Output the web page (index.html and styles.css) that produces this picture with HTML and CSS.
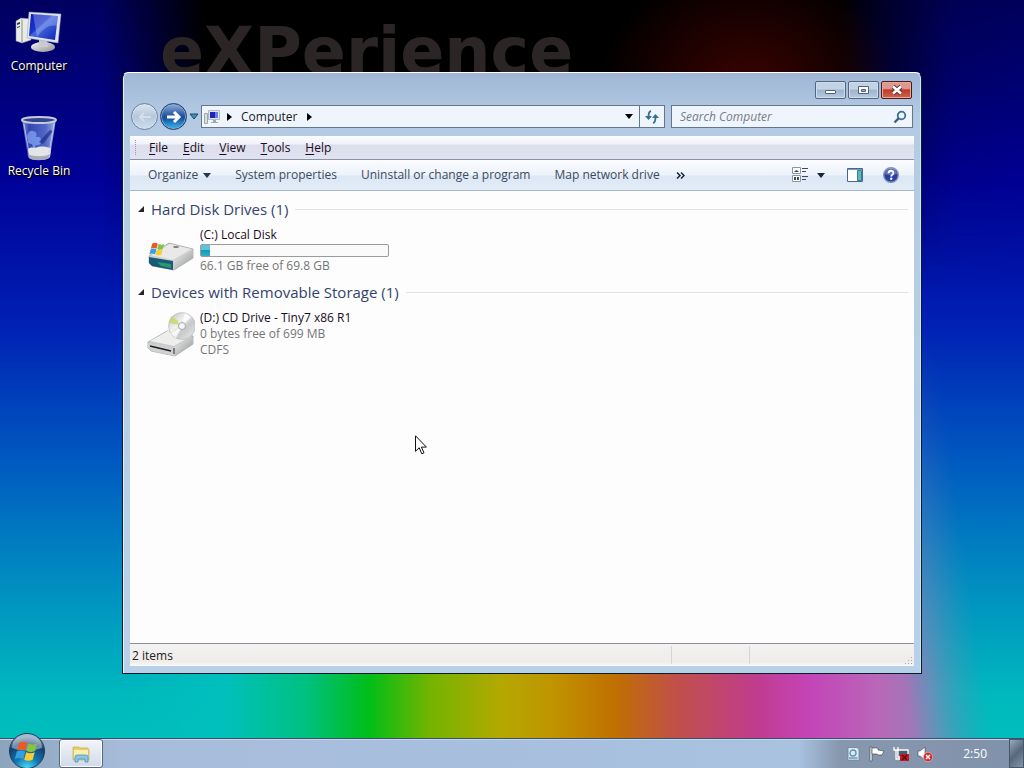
FILE: index.html
```html
<!DOCTYPE html>
<html lang="en">
<head>
    <meta charset="UTF-8">
    <meta name="viewport" content="width=device-width, initial-scale=1.0">
    <title>Computer</title>
    <link rel="stylesheet" href="styles.css">
</head>
<body>
    <svg class="defs" width="0" height="0" aria-hidden="true">
        <defs>
            <linearGradient id="screen" x1="0" y1="0" x2="1" y2="1">
                <stop offset="0" stop-color="#0a1fb4"/>
                <stop offset=".4" stop-color="#1a36cc"/>
                <stop offset=".46" stop-color="#4468e0"/>
                <stop offset="1" stop-color="#0d22b0"/>
            </linearGradient>
            <linearGradient id="metal" x1="0" y1="0" x2="1" y2="1">
                <stop offset="0" stop-color="#f4f4f4"/>
                <stop offset="1" stop-color="#8f9192"/>
            </linearGradient>
            <linearGradient id="bin" x1="0" y1="0" x2="1" y2="0">
                <stop offset="0" stop-color="#8fa0dc"/>
                <stop offset=".2" stop-color="#3346ae"/>
                <stop offset=".7" stop-color="#5468c8"/>
                <stop offset="1" stop-color="#a3b2e6"/>
            </linearGradient>
            <linearGradient id="disc" x1="0" y1="0" x2="1" y2="1">
                <stop offset="0" stop-color="#b9bdb9"/>
                <stop offset=".4" stop-color="#f2f2f2"/>
                <stop offset=".6" stop-color="#c6c8ca"/>
                <stop offset="1" stop-color="#ececec"/>
            </linearGradient>
            <radialGradient id="orb" cx=".5" cy="1" r=".9">
                <stop offset="0" stop-color="#4fe0f4"/>
                <stop offset=".4" stop-color="#0f78b4"/>
                <stop offset=".8" stop-color="#143f6e"/>
                <stop offset="1" stop-color="#6d8eae"/>
            </radialGradient>
            <symbol id="flag" viewBox="0 0 24 24">
                <path fill="#ea5a24" d="M4 4c3-2 6-1.500 8.500 0l-2 7.500c-3-1.500-5.500-1.500-8.500 0z"/>
                <path fill="#86c440" d="M13.500 4.500c3 1.500 5.500 1.500 8.500 0l-2 7.500c-3 1.500-5.500 1.500-8.500 0z"/>
                <path fill="#35a0e0" d="M1.800 12.500c3-1.500 5.500-1.500 8.500 0l-2 7.500c-3-1.500-5.500-1.500-8.500 0z"/>
                <path fill="#fccb2d" d="M11.200 13.200c3 1.500 5.500 1.500 8.500 0l-2 7.500c-3 1.500-5.500 1.500-8.500 0z"/>
            </symbol>
        </defs>
    </svg>

    <main class="desktop">
        <div class="rainbow"></div>
        <div class="night"></div>
        <div class="wordmark">eXPerience</div>

        <nav class="shortcuts">
            <a href="#computer" class="shortcut">
                <svg width="48" height="48" viewBox="0 0 48 48">
                    <path fill="#e9ebe6" stroke="#8a8d90" stroke-width=".5" d="M1 12l5-3 10 1v21l-9 3-6-2z"/>
                    <path fill="#b9bcbc" d="M6 10l2 1v22l-1 1-1-1z"/>
                    <path fill="#3a3c40" d="M2 14l3-1v2l-3 1zM2 18l3-1v1l-3 1z"/>
                    <ellipse cx="28" cy="38" rx="12" ry="5" fill="url(#metal)"/>
                    <path fill="#c8cbd0" d="M24 30l8 1 1 7h-9z"/>
                    <path fill="#dfe3ea" stroke="#9aa1b4" stroke-width=".5" d="M14 3l32 2-3 29-31-5z"/>
                    <path fill="url(#screen)" d="M16 5l27 2-3 24-26-4z"/>
                    <path fill="#fff" opacity=".25" d="M43 7l-1 10c-8-2-14 3-20 11L18 5z"/>
                </svg>
                <span>Computer</span>
            </a>
            <a href="#bin" class="shortcut">
                <svg width="48" height="48" viewBox="0 0 48 48">
                    <path fill="url(#bin)" d="M7 5h34l-6 38c-2 4-20 4-22 0z"/>
                    <path fill="#7da0f0" opacity=".8" d="M12 22q2-6 6-5 5 1 3 6 5-1 5 4t-5 4l-2 5-2-6q-5 0-4-4z"/>
                    <path fill="#1c2c86" opacity=".7" d="M24 28l11-12 3 1-10 13z"/>
                    <path fill="#e4e5e6" d="M13 35c4-3 6 0 10-2 5-1 8 0 13 1l-1 9c-4 4-18 4-21 0z"/>
                    <path fill="#a9adb5" d="M13 40c5 3 18 3 22 0l-1 4c-4 3-17 3-20 0z"/>
                    <ellipse cx="24" cy="6" rx="17" ry="3" fill="#32458e" stroke="#c5cbd8" stroke-width="2"/>
                    <path d="M9 10l5 29M39 10l-5 29" stroke="#d3dbf5" opacity=".7"/>
                </svg>
                <span>Recycle Bin</span>
            </a>
        </nav>

        <section class="window" aria-label="Computer">
            <header class="caption">
                <button class="caption-btn" aria-label="Minimize">
                    <svg width="14" height="12" viewBox="0 0 14 12"><rect x="1.500" y="6.500" width="10" height="3" rx=".5" fill="#fff" stroke="#53607c"/></svg>
                </button>
                <button class="caption-btn" aria-label="Maximize">
                    <svg width="14" height="12" viewBox="0 0 14 12"><path fill="#fff" fill-rule="evenodd" stroke="#53607c" d="M1.500 2.500h10v7h-10zM4.500 5.500v2h4v-2z"/></svg>
                </button>
                <button class="caption-btn close" aria-label="Close">
                    <svg width="14" height="12" viewBox="0 0 14 12"><path stroke="#5e3440" stroke-width="4.500" d="M3 2.500l8 7M11 2.500l-8 7"/><path stroke="#fff" stroke-width="2.600" d="M3 2.500l8 7M11 2.500l-8 7"/></svg>
                </button>
            </header>

            <div class="navbar">
                <div class="travel">
                    <button class="round" aria-label="Back">
                        <svg width="16" height="16" viewBox="0 0 16 16"><path fill="none" stroke="#d3deea" stroke-width="2" d="M14 8H3M7 4L3 8l4 4"/></svg>
                    </button>
                    <button class="round forward" aria-label="Forward">
                        <svg width="16" height="16" viewBox="0 0 16 16"><path fill="none" stroke="#fff" stroke-width="3" d="M1 8h12M8 3l5 5-5 5"/></svg>
                    </button>
                    <button class="recent" aria-label="Recent pages">
                        <svg width="10" height="7" viewBox="0 0 10 7"><path fill="#3d93c4" stroke="#22435f" d="M1 1h8L5 6z"/></svg>
                    </button>
                </div>
                <div class="address">
                    <svg class="place" width="18" height="18" viewBox="0 0 18 18">
                        <path fill="#d9dedd" stroke="#8d9597" stroke-width=".8" d="M2.500 5.500h3v10h-3z"/>
                        <path fill="#dfe4ee" stroke="#a5adc2" stroke-width=".8" d="M6.500 2.500h11v9h-11z"/>
                        <path fill="#1a25bc" d="M8 4h5v6H8z"/><path fill="#6c7de0" d="M13 4h3v6h-3z"/>
                        <path fill="#a0a8b2" d="M11 12h3v2h2v1H9v-1h2z"/>
                    </svg>
                    <svg class="tick" width="5" height="8" viewBox="0 0 5 8"><path d="M0 0l5 4-5 4z"/></svg>
                    <a href="#computer">Computer</a>
                    <svg class="tick" width="5" height="8" viewBox="0 0 5 8"><path d="M0 0l5 4-5 4z"/></svg>
                    <button class="drop" aria-label="Previous locations">
                        <svg width="8" height="5" viewBox="0 0 8 5"><path d="M0 0h8L4 5z"/></svg>
                    </button>
                    <button class="refresh" aria-label="Refresh">
                        <svg width="16" height="16" viewBox="0 0 16 16">
                            <path fill="none" stroke="#36708c" stroke-width="1.800" d="M7 2C4.500 2.500 4.500 5 4.500 8M9 14c2.500-.5 2.500-3 2.500-6"/>
                            <path fill="#36708c" d="M1 7h7l-3.500 4zM8 9h7l-3.500-4z"/>
                        </svg>
                    </button>
                </div>
                <form class="search">
                    <input type="text" aria-label="Search Computer" placeholder="Search Computer">
                    <svg width="14" height="14" viewBox="0 0 14 14"><circle cx="8.500" cy="5.500" r="3.800" fill="none" stroke="#3d6f93" stroke-width="1.800"/><path stroke="#3d5f83" stroke-width="2.400" d="M5.800 8.200L1.500 12.500"/></svg>
                </form>
            </div>

            <div class="menubar">
                <button><u>F</u>ile</button>
                <button><u>E</u>dit</button>
                <button><u>V</u>iew</button>
                <button><u>T</u>ools</button>
                <button><u>H</u>elp</button>
            </div>

            <div class="commands">
                <button>Organize <svg width="8" height="5" viewBox="0 0 8 5"><path fill="#1e395b" d="M0 0h8L4 5z"/></svg></button>
                <button>System properties</button>
                <button>Uninstall or change a program</button>
                <button>Map network drive</button>
                <button class="more" aria-label="More">
                    <svg width="9" height="7" viewBox="0 0 9 7"><path fill="none" stroke="#14253d" stroke-width="1.500" d="M1 .5l3 3-3 3M5 .5l3 3-3 3"/></svg>
                </button>
                <div class="tools">
                    <button aria-label="Change your view">
                        <svg width="16" height="16" viewBox="0 0 16 16">
                            <path fill="#fff" stroke="#8b95a2" d="M.5.500h8v6h-8zM.5 8.500h8v6h-8z"/>
                            <path fill="#39495c" d="M2 5l2-2 2 1 1 1zM2 10h2v3H2zM5 10h2v3H5zM10 1h6v1h-6zM10 4h4v1h-4zM10 9h6v1h-6zM10 12h4v1h-4z"/>
                        </svg>
                    </button>
                    <button aria-label="More options">
                        <svg width="8" height="5" viewBox="0 0 8 5"><path fill="#14253d" d="M0 0h8L4 5z"/></svg>
                    </button>
                    <button class="pane" aria-label="Show the preview pane">
                        <svg width="16" height="14" viewBox="0 0 16 14"><path fill="#fff" stroke="#47688c" d="M.5.500h15v13H.5z"/><path fill="#7d99b8" d="M1 1h14v1H1z"/><path fill="#58b9bf" stroke="#3c7d98" d="M10.500 2.500h4v10h-4z"/></svg>
                    </button>
                    <button aria-label="Get help">
                        <svg width="16" height="16" viewBox="0 0 16 16"><circle cx="8" cy="8" r="7.300" fill="#2b40a6" stroke="#8294b6" stroke-width="1.400"/><path fill="#fff" opacity=".25" d="M2 7a6 6 0 0 1 12 0q-6 2-12 0z"/><path fill="none" stroke="#fff" stroke-width="1.900" d="M5.600 6.200C5.600 3 10.400 3 10.400 6c0 1.600-2.200 1.700-2.200 3.600"/><circle cx="8.200" cy="11.800" r="1.200" fill="#fff"/></svg>
                    </button>
                </div>
            </div>

            <div class="files">
                <section class="group">
                    <h2><svg width="6" height="6" viewBox="0 0 6 6"><path fill="#262626" d="M6 0v6H0z"/></svg>Hard Disk Drives (1)</h2>
                    <div class="drive">
                        <svg width="48" height="48" viewBox="0 0 48 48">
                            <path fill="#cfd1d1" stroke="#8b8d8d" stroke-width=".6" d="M2 29l20-13 24 6v9L27 43 5 39l-3-3z"/>
                            <path fill="#e9e9e8" d="M4 28l19-11 21 5-18 11z"/>
                            <path fill="url(#metal)" d="M26 34l20-11v8L27 43z"/>
                            <path fill="#195a78" d="M2 30l24 4v9L5 39l-3-3z"/>
                            <path fill="#2a9a6a" d="M10 35l14 2v4l-10-2z"/>
                            <ellipse cx="29" cy="20" rx="3" ry="1" fill="#777"/>
                            <use href="#flag" x="2" y="14" width="17" height="16"/>
                        </svg>
                        <div class="info">
                            <span class="name">(C:) Local Disk</span>
                            <div class="usage" role="meter" aria-label="Used space" aria-valuemin="0" aria-valuemax="100" aria-valuenow="5"><div class="used" style="width: 5%"></div></div>
                            <span class="detail">66.1 GB free of 69.8 GB</span>
                        </div>
                    </div>
                </section>
                <section class="group">
                    <h2><svg width="6" height="6" viewBox="0 0 6 6"><path fill="#262626" d="M6 0v6H0z"/></svg>Devices with Removable Storage (1)</h2>
                    <div class="drive">
                        <svg width="48" height="48" viewBox="0 0 48 48">
                            <path fill="#c9cbcb" stroke="#8b8d8d" stroke-width=".6" d="M1 32l19-11 26 5v8L28 46 4 41l-3-3z"/>
                            <path fill="#eeeeed" d="M3 31l18-10 23 5-17 10z"/>
                            <path fill="url(#metal)" d="M27 37l19-10v7L28 46z"/>
                            <path fill="#cfd0d1" d="M1 33l26 4 1 9-24-5-3-3z"/>
                            <path stroke="#1f1f1f" stroke-width="1.500" d="M3 36l21 5"/>
                            <path stroke="#2a2a2a" d="M27 38v6"/>
                            <circle cx="35" cy="16" r="13.500" fill="url(#disc)" stroke="#b4b6b6" stroke-width=".6"/>
                            <path fill="#c3d86c" opacity=".8" d="M22 13l10 2-1-4-7-5z"/>
                            <path fill="#fff" opacity=".8" d="M35 16l3-13 6 4zM35 16l-6 12-5-4z"/>
                            <circle cx="35" cy="16" r="3.500" fill="#f7f7f7" stroke="#a5a7a8"/>
                        </svg>
                        <div class="info">
                            <span class="name">(D:) CD Drive - Tiny7 x86 R1</span>
                            <span class="detail">0 bytes free of 699 MB</span>
                            <span class="detail">CDFS</span>
                        </div>
                    </div>
                </section>
            </div>

            <footer class="status">
                <span class="count">2 items</span>
                <span class="cell"></span>
                <span class="cell wide"></span>
                <svg class="grip" width="9" height="9" viewBox="0 0 9 9"><path fill="#a5aab2" d="M7 1h1v1H7zM4 4h1v1H4zM7 4h1v1H7zM1 7h1v1H1zM4 7h1v1H4zM7 7h1v1H7z"/></svg>
            </footer>
        </section>

        <svg class="cursor" width="12" height="20" viewBox="0 0 12 20"><path fill="#fff" stroke="#111" d="M.5.800v15.500l3.700-3.500 2.600 6 2.200-1-2.600-5.700h5z"/></svg>
    </main>

    <footer class="taskbar">
        <button class="start" aria-label="Start">
            <svg width="38" height="38" viewBox="0 0 38 38">
                <circle cx="19" cy="19" r="17.500" fill="url(#orb)" stroke="#1b3b58"/>
                <path fill="#fff" opacity=".4" d="M4 16a15 14 0 0 1 30 0q-15 5-30 0z"/>
                <use href="#flag" x="7" y="7" width="24" height="24"/>
            </svg>
        </button>
        <button class="task" aria-label="Computer">
            <svg width="20" height="18" viewBox="0 0 20 18">
                <path fill="#e7cf6c" stroke="#c2a644" stroke-width=".6" d="M2 2h6l1 1h8l1 2v10H2z"/>
                <path fill="#fbefae" d="M3 5h14v8H3z"/>
                <path fill="#8cc6e6" stroke="#4a96c4" stroke-width=".8" d="M4 17v-5q0-2 2-2h9q2 0 2 2v5h-3v-3H7v3z"/>
            </svg>
        </button>
        <div class="tray">
            <svg width="16" height="16" viewBox="0 0 16 16"><path fill="#dbe8f0" stroke="#6a8499" stroke-width=".8" d="M3 1.500h9l2 2v11H3z"/><path fill="#b5cddd" d="M4 11h9v3H4z"/><circle cx="8" cy="7" r="3" fill="none" stroke="#5d93b5" stroke-width="1.300"/><path stroke="#5d93b5" d="M4 12h8"/></svg>
            <svg width="16" height="16" viewBox="0 0 16 16"><path fill="#fff" stroke="#333c48" stroke-width=".6" d="M1 1h2v14H1z"/><path fill="#fff" stroke="#333c48" stroke-width=".6" d="M3 2h6v2l6 1-2 4H9L8 8H3z"/></svg>
            <svg width="16" height="16" viewBox="0 0 16 16"><path fill="#4d5a6a" stroke="#fff" stroke-width="1.300" d="M5 4h10v7H5zM7 14h6"/><path fill="none" stroke="#fff" stroke-width="1.300" d="M1 1v3h4V1M3 4v9h4"/><path fill="#c61a22" d="M7 8h9v7H7z"/><path stroke="#5a0c12" stroke-width="1.300" d="M9 9l5 5M14 9l-5 5"/></svg>
            <svg width="16" height="16" viewBox="0 0 16 16"><path fill="#fff" stroke="#3e4854" stroke-width=".6" d="M1 5h2l5-4v13l-5-4H1z"/><circle cx="11" cy="11" r="4.700" fill="#d5282c" stroke="#fff" stroke-width=".4"/><path stroke="#fff" stroke-width="1.500" d="M9 9l4 4M13 9l-4 4"/></svg>
            <time>2:50</time>
            <button class="peek" aria-label="Show desktop"></button>
        </div>
    </footer>
</body>
</html>
```

FILE: styles.css
```css
* { box-sizing: border-box; }
body { margin: 0; height: 100vh; display: flex; flex-direction: column; overflow: hidden; font: 12px/16px "Open Sans", "Noto Sans", sans-serif; color: #1b0b22; }
button { margin: 0; padding: 0; border: 0; background: none; color: inherit; font: inherit; }
svg { display: block; flex: none; }
a { color: inherit; text-decoration: none; }
.defs { position: absolute; }

/* wallpaper */
.desktop { position: relative; flex: 1; overflow: hidden; background: linear-gradient(#000060, #000098 24%, #0020b4 44%, #0058c0 62%, #0090c0 80%, #00b8be 94%, #00bebc); }
.rainbow, .night { position: absolute; inset: 0; }
.rainbow {
    background: linear-gradient(90deg, transparent 12%, #00c0bc 22%, #00c080 30%, #00be18 36%, #74b400 42%, #b4a800 49%, #c09400 54%, #c07000 60%, #c05048 66%, #c03c90 74%, #c444b8 79%, #b868b8 86%, #9080b8 91%, #5090b8 96%);
    -webkit-mask-image: linear-gradient(transparent 42%, #000 92%), linear-gradient(82deg, #000 81%, transparent 88%);
    -webkit-mask-composite: source-in;
    mask-image: linear-gradient(transparent 42%, #000 92%), linear-gradient(82deg, #000 81%, transparent 88%);
    mask-composite: intersect;
}
.night {
    background:
        radial-gradient(ellipse 150px 130px at 73% 90px, #3c0300, transparent),
        linear-gradient(90deg, transparent 10%, #000 20%, #000 82%, rgba(0, 0, 24, .8) 86%, rgba(0, 0, 40, .2) 93%, rgba(0, 0, 40, .1));
    -webkit-mask-image: linear-gradient(#000 9%, transparent 40%);
    mask-image: linear-gradient(#000 9%, transparent 40%);
}
.wordmark { position: absolute; left: 160px; top: 16px; font: bold 65px/72px "DejaVu Sans", sans-serif; color: #2b2525; }

.shortcuts { position: relative; width: 78px; padding-top: 9px; display: flex; flex-direction: column; gap: 40px; color: #fff; text-shadow: 0 1px 2px #000, 1px 1px 1px #000; }
.shortcut { display: flex; flex-direction: column; align-items: center; gap: 1px; }

/* explorer window */
.window { position: absolute; top: 72px; right: 102px; bottom: 64px; left: 122px; display: flex; flex-direction: column; padding: 0 7px 7px; border: 1px solid #0c1c2c; border-top-color: #fff; border-radius: 6px 6px 0 0; background: linear-gradient(#9fb6d6, #b3c9e2 40px, #b4cbe2 70px, #b9d1e8); box-shadow: inset 1px 0 #e3f1fa, inset -1px 0 #c5e8f4; }
.caption { display: flex; justify-content: flex-end; gap: 2px; padding: 8px 2px 6px; }
.caption-btn { width: 31px; height: 18px; display: grid; place-items: center; border: 1px solid #56657f; border-radius: 2px; background: linear-gradient(#c3d3e6 45%, #9db3cd 50%, #b5cbe2); box-shadow: inset 0 0 0 1px #cfdded; }
.close { border-color: #4b1820; background: linear-gradient(#dd9a8c 40%, #bc3a28 50%, #d4654c); box-shadow: inset 0 0 0 1px #e8a89a; }

.navbar { display: flex; align-items: center; height: 23px; margin-bottom: 8px; padding: 0 1px; }
.travel { display: flex; align-items: center; width: 70px; gap: 2px; }
.round { width: 27px; height: 27px; display: grid; place-items: center; border: 1px solid #6b819f; border-radius: 50%; background: linear-gradient(#dbe6f1, #b5c7da 50%, #cddeed); box-shadow: inset 0 0 0 1px #d5e2ef; }
.forward { border-color: #1f3d69; background: linear-gradient(#8fb0dc, #1f4d98 50%, #1558a8 60%, #3fb8ec); box-shadow: inset 0 0 0 1px #7fa8d4; }
.address { flex: 1; align-self: stretch; display: flex; align-items: center; border: 1px solid #64758e; background: #eff5fd; color: #1a1a2a; }
.place { margin-right: 7px; }
.address a { margin: 0 9px; }
.drop { margin-left: auto; padding: 4px 6px; }
.refresh { align-self: stretch; width: 25px; display: grid; place-items: center; border-left: 1px solid #64758e; }
.search { width: 242px; align-self: stretch; display: flex; align-items: center; margin-left: 6px; padding: 0 5px 0 8px; border: 1px solid #64758e; background: #eff5fd; }
.search input { flex: 1; min-width: 0; padding: 0; border: 0; outline: 0; background: none; font: inherit; }
.search input::placeholder { color: #767c88; font-style: italic; opacity: 1; }

.menubar { position: relative; display: flex; align-items: center; gap: 15px; height: 24px; padding-left: 19px; border-bottom: 1px solid #8b93a8; background: linear-gradient(#fdfdff, #f0f2fa 8px, #dcdeec 9px, #e2e3f0); }
.menubar::before { content: ""; position: absolute; left: 5px; top: 4px; bottom: 4px; border-left: 1px dotted #b08cb4; }
.menubar u { text-underline-offset: 2px; }
.commands { display: flex; align-items: center; gap: 24px; height: 31px; padding: 0 15px 0 18px; border-bottom: 1px solid #a6b8ce; background: linear-gradient(#fafcff, #edf3fb 15px, #dce7f4 16px, #e3edf8); color: #3b4a61; }
.commands button { display: flex; align-items: center; gap: 5px; white-space: nowrap; }
.commands .more { margin-left: -8px; }
.tools { display: flex; align-items: center; gap: 9px; margin-left: auto; }
.tools .pane { margin: 0 11px 0 13px; }

.files { flex: 1; min-height: 0; padding: 7px 6px 0 8px; background: #fdfdfd; }
.group { margin-bottom: 6px; }
.group h2 { display: flex; align-items: center; gap: 7px; margin: 0; font-size: 15px; line-height: 22px; font-weight: 400; color: #33446c; }
.group h2::after { content: ""; flex: 1; height: 1px; background: #e0e3e8; }
.drive { display: flex; gap: 5px; padding: 7px 0 0 9px; }
.info { display: flex; flex-direction: column; }
.detail { color: #757575; }
.usage { width: 189px; height: 13px; margin: 1px 0; border: 1px solid #9b9b9b; border-radius: 2px; background: #fafafa; }
.used { height: 100%; background: linear-gradient(#5cc4d8 45%, #1b98b4 50%, #30b0c8); }

.status { position: relative; display: flex; height: 23px; border-top: 1px solid #8f8f94; background: linear-gradient(#f3f2f2, #efecea 80%, #fbfbfb); }
.count { flex: 1; padding: 4px 2px; color: #222; }
.cell { width: 78px; margin: 2px 0; border-left: 1px solid #d5d5d5; }
.wide { width: 165px; }
.grip { position: absolute; right: 1px; bottom: 1px; }
.cursor { position: absolute; left: 415px; top: 435px; }

/* taskbar */
.taskbar { position: relative; display: flex; height: 30px; border-top: 1px solid #35536e; background: linear-gradient(90deg, #8ba3bb, #a7bcda 12%, #a8c2e0 78%, #8797ae 82%, #8092ab); box-shadow: inset 0 1px #c7d5e5; }
.start { width: 38px; height: 38px; margin: -7px 13px 0 8px; }
.task { width: 44px; height: 29px; display: grid; place-items: center; border: 1px solid #54677f; border-radius: 3px; background: linear-gradient(#f2f5fa, #d0daea); box-shadow: inset 0 0 0 1px #fff; }
.tray { display: flex; align-items: center; gap: 8px; margin-left: auto; color: #fff; }
.tray time { margin: 0 14px 0 22px; }
.peek { width: 15px; height: 29px; border: 1px solid #47566a; background: linear-gradient(135deg, #9aa9bc, #56667c 50%, #8494a8); }
```
